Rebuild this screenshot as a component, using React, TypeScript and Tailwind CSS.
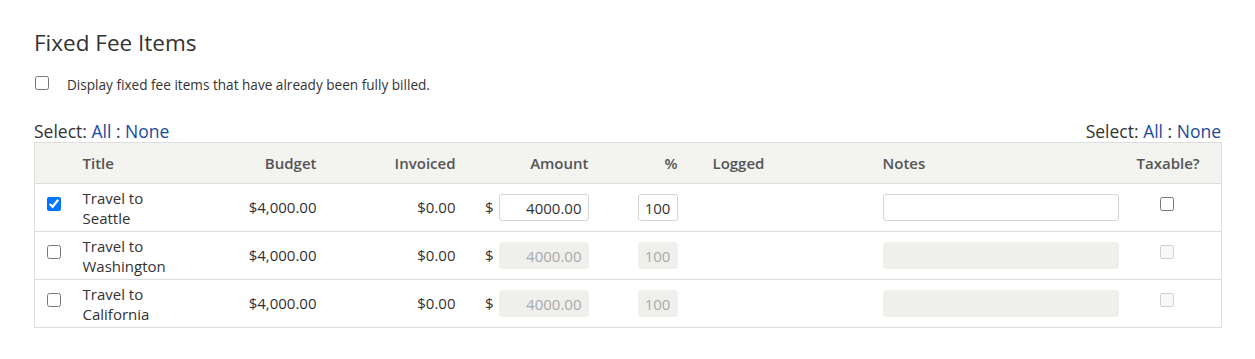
const rows = [
  { title: 'Travel to Seattle', checked: true },
  { title: 'Travel to Washington', checked: false },
  { title: 'Travel to California', checked: false },
]

function SelectLinks() {
  return (
    <div className="text-[17.5px] leading-[20px] text-[#333]">
      Select: <a className="text-[#1a4b9b]">All</a> : <a className="text-[#1a4b9b]">None</a>
    </div>
  )
}

export default function App() {
  return (
    <div
      className="px-[34px] pt-[28px] text-[15px] text-[#333] bg-white min-h-[359px]"
      style={{ fontFamily: '"Open Sans", "Liberation Sans", sans-serif' }}
    >
      <h2 className="text-[22.5px] leading-[30px] font-normal text-[#333]">Fixed Fee Items</h2>

      <label className="mt-[13px] flex items-center">
        <input type="checkbox" className="m-0 ml-[1px] w-[14px] h-[14px]" />
        <span className="ml-[18px] text-[13.6px] leading-[18px] mt-[5px]">
          Display fixed fee items that have already been fully billed.
        </span>
      </label>

      <div className="mt-[27px] flex justify-between">
        <SelectLinks />
        <SelectLinks />
      </div>

      <table className="mt-[1px] w-[1188px] table-fixed border-collapse border border-[#dddddd]">
        <colgroup>
          <col className="w-[36px]" />
          <col className="w-[108px]" />
          <col className="w-[150px]" />
          <col className="w-[139px]" />
          <col className="w-[133px]" />
          <col className="w-[100px]" />
          <col className="w-[170px]" />
          <col className="w-[260px]" />
          <col />
        </colgroup>
        <thead>
          <tr className="bg-[#f3f3f0] h-[41px] text-[#555] border-b border-[#dddddd]">
            <th />
            <th className="text-left pl-3 font-semibold">Title</th>
            <th className="text-right pr-3 font-semibold">Budget</th>
            <th className="text-right pr-3 font-semibold">Invoiced</th>
            <th className="text-right pr-3 font-semibold">Amount</th>
            <th className="text-right pr-[23px] font-semibold">%</th>
            <th className="text-left pl-3 font-semibold">Logged</th>
            <th className="text-left pl-3 font-semibold">Notes</th>
            <th className="text-left pl-[6px] font-semibold">Taxable?</th>
          </tr>
        </thead>
        <tbody>
          {rows.map((r) => (
            <tr key={r.title} className="h-[48px] border-b border-[#dddddd]">
              <td className="pl-[12px]">
                <div className="flex pb-[7px]">
                  <input type="checkbox" defaultChecked={r.checked} className="m-0 w-[14px] h-[14px]" />
                </div>
              </td>
              <td className="pl-3 leading-[20px]">{r.title}</td>
              <td className="text-right pr-3">$4,000.00</td>
              <td className="text-right pr-3">$0.00</td>
              <td className="pr-3">
                <div className="flex items-center justify-end gap-[5px]">
                  <span>$</span>
                  {r.checked ? (
                    <input
                      defaultValue="4000.00"
                      className="w-[90px] h-[27px] border border-[#d4d4d4] rounded-[3px] text-right pr-[6px] text-[#333] outline-none"
                    />
                  ) : (
                    <input
                      disabled
                      defaultValue="4000.00"
                      className="w-[90px] h-[27px] border border-[#efefec] bg-[#efefec] rounded-[3px] text-right pr-[6px] text-[#aaa]"
                    />
                  )}
                </div>
              </td>
              <td className="text-right pr-[23px]">
                {r.checked ? (
                  <input
                    defaultValue="100"
                    className="w-[40px] h-[27px] border border-[#d4d4d4] rounded-[3px] text-center text-[#333] outline-none"
                  />
                ) : (
                  <input
                    disabled
                    defaultValue="100"
                    className="w-[40px] h-[27px] border border-[#efefec] bg-[#efefec] rounded-[3px] text-center text-[#aaa]"
                  />
                )}
              </td>
              <td className="pl-3" />
              <td className="pl-3">
                {r.checked ? (
                  <input className="block w-[236px] h-[27px] border border-[#d4d4d4] rounded-[3px] outline-none" />
                ) : (
                  <input disabled className="block w-[236px] h-[27px] border border-[#efefec] bg-[#efefec] rounded-[3px]" />
                )}
              </td>
              <td className="pl-[29px]">
                <div className="flex pb-[7px]">
                  <input type="checkbox" disabled={!r.checked} className="m-0 w-[14px] h-[14px]" />
                </div>
              </td>
            </tr>
          ))}
        </tbody>
      </table>
    </div>
  )
}
